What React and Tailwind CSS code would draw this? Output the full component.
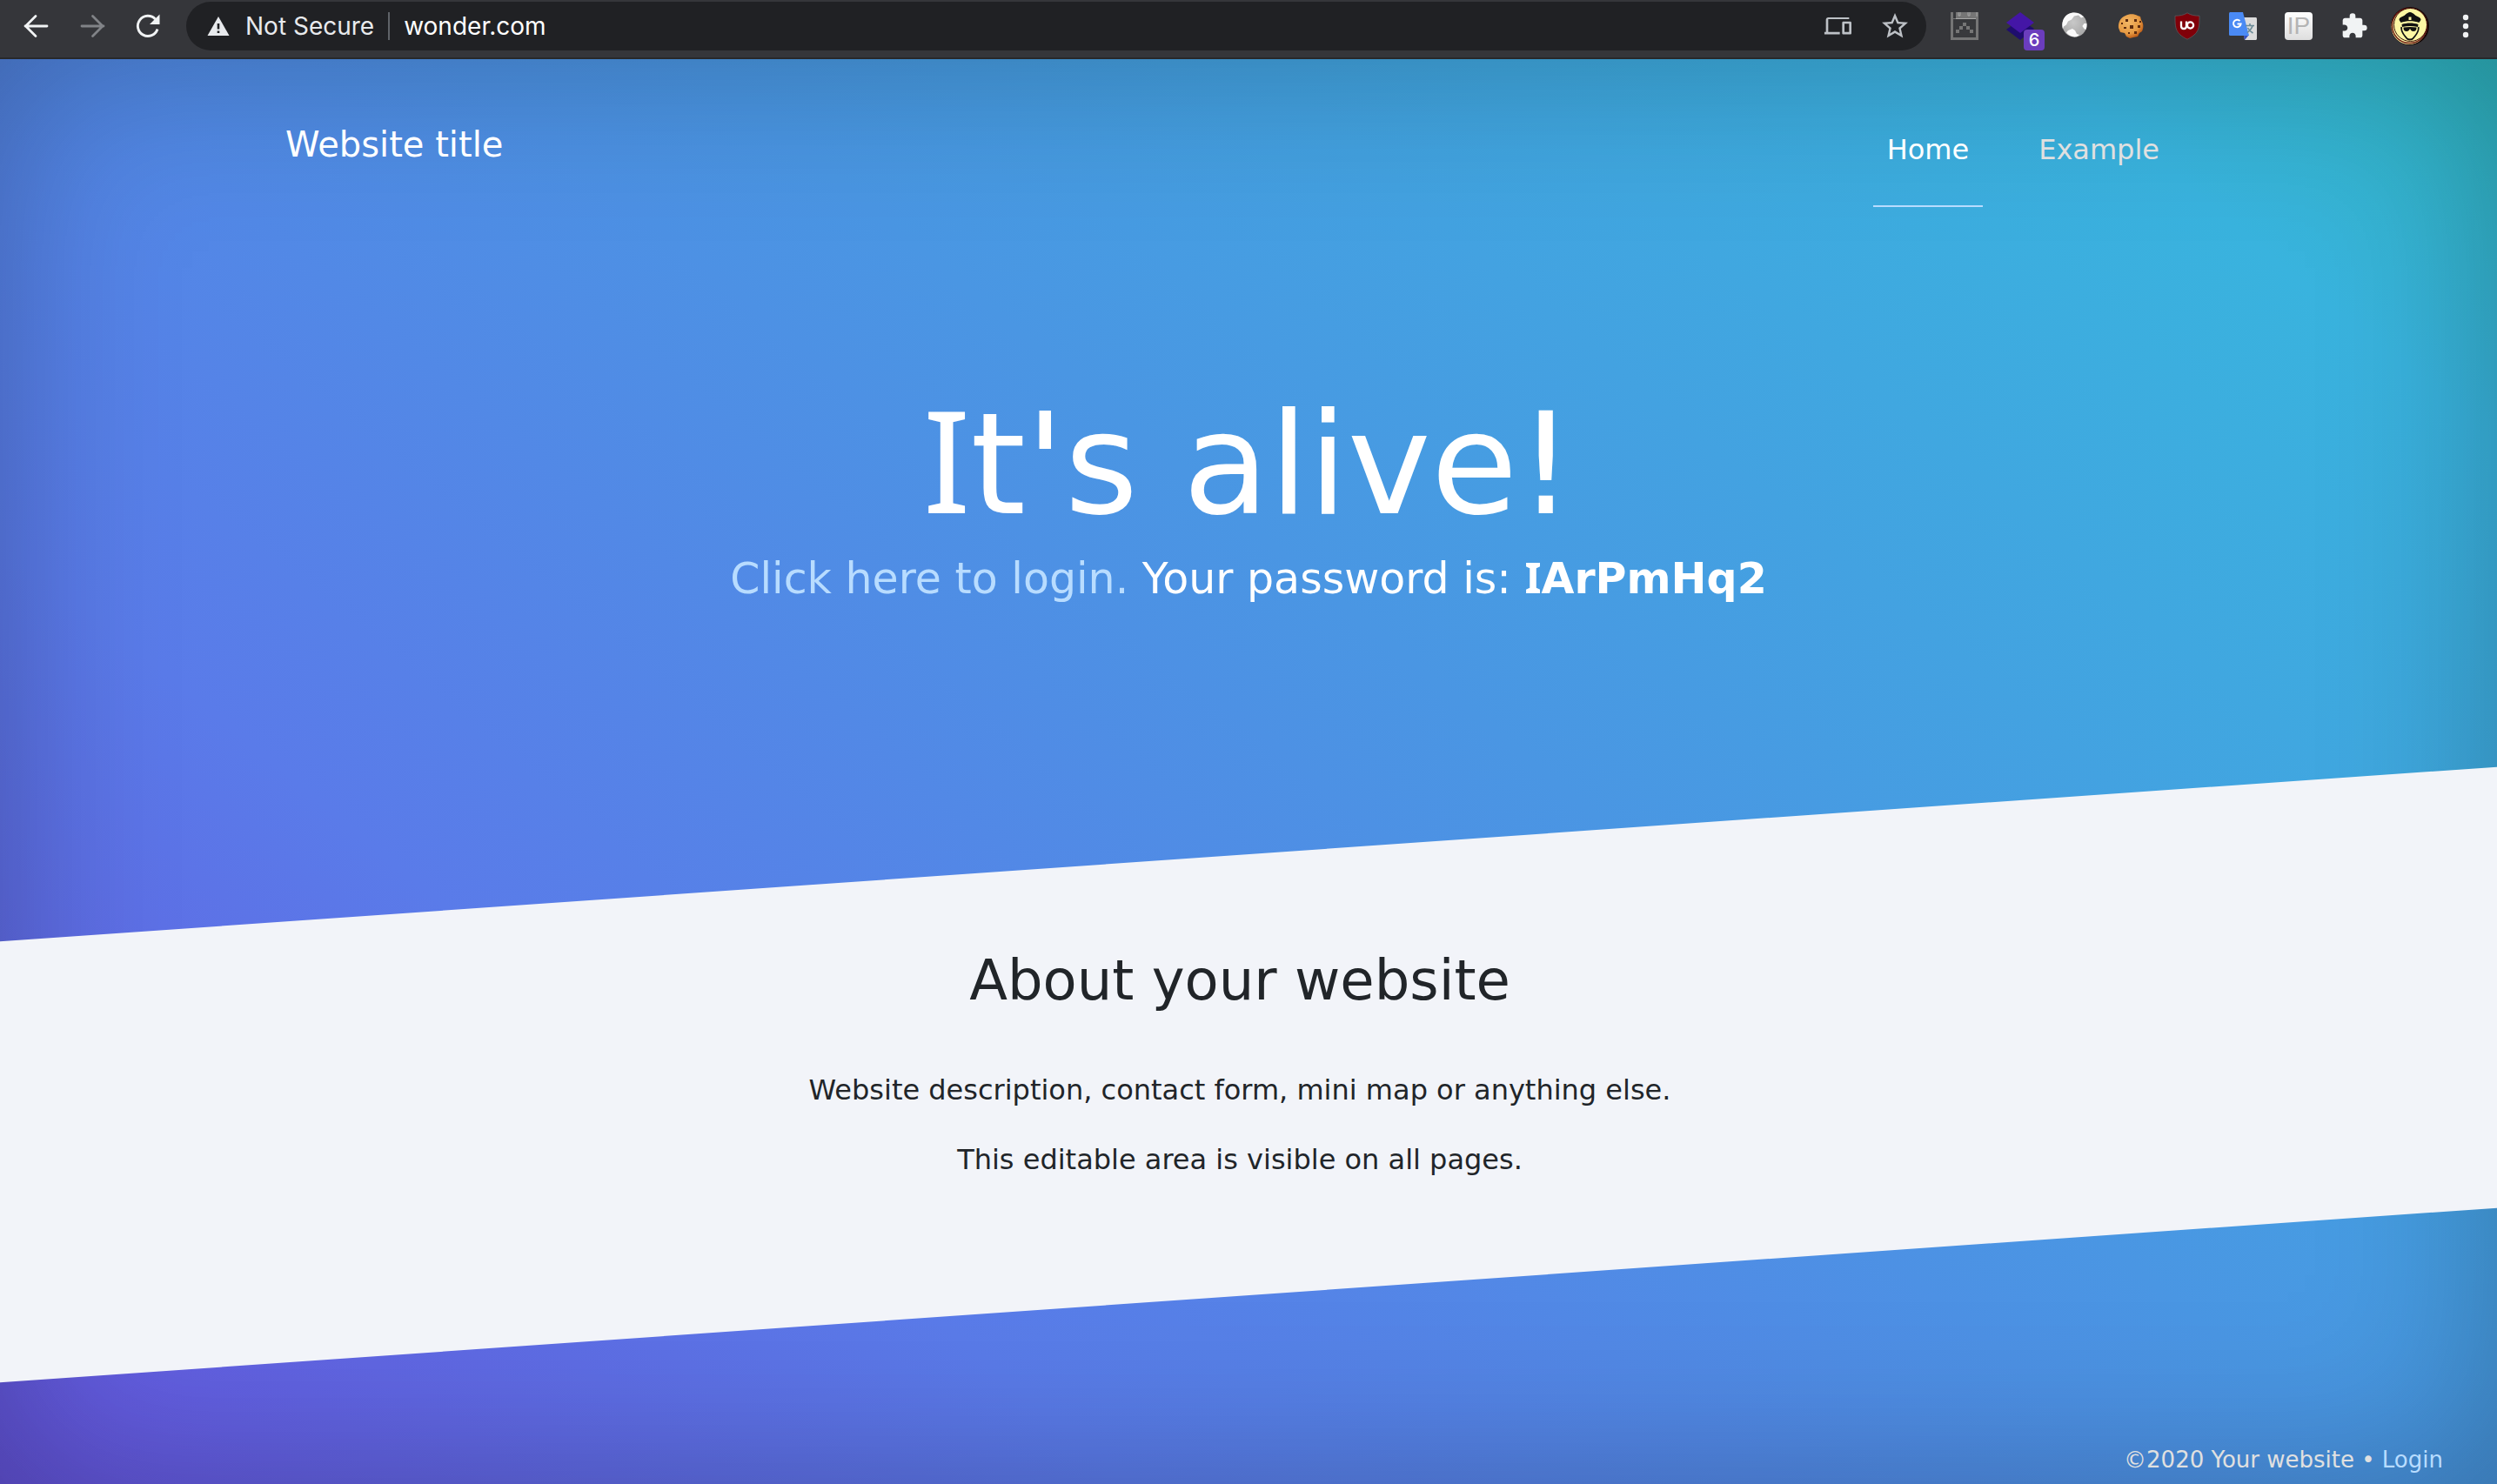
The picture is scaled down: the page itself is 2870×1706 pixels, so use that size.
import React from "react";

const BackIcon = () => (
  <svg viewBox="0 0 32 32" className="size-8" fill="none" stroke="#f1f3f4" strokeWidth="2.8" strokeLinecap="round" strokeLinejoin="round">
    <path d="M28 16H3M15 4.500 3.500 16 15 27.500" />
  </svg>
);

const ForwardIcon = () => (
  <svg viewBox="0 0 32 32" className="size-8" fill="none" stroke="#818387" strokeWidth="2.8" strokeLinecap="round" strokeLinejoin="round">
    <path d="M4 16h25M16.500 4.500 28 16 16.500 27.500" />
  </svg>
);

const ReloadIcon = () => (
  <svg viewBox="0 0 32 32" className="size-8">
    <path d="M27 19.500A11.600 11.600 0 1 1 24.500 8" fill="none" stroke="#f1f3f4" strokeWidth="2.900" />
    <path d="M29.500 2.500V14H18z" fill="#f1f3f4" />
  </svg>
);

const WarningIcon = () => (
  <svg viewBox="0 0 26 24" className="w-[26px] h-6">
    <path d="M13 1 25.500 23H.5z" fill="#e8eaed" />
    <path d="M11.700 9h2.600v6.500h-2.600zM11.700 17.500h2.600V20h-2.600z" fill="#202124" />
  </svg>
);

const DevicesIcon = () => (
  <svg viewBox="0 0 24 24" className="size-8" fill="#bdc1c6">
    <path d="M4 6h18V4.500H4c-1.100 0-2 .9-2 2V17H.7v2.200H14V17H4zm19 2h-6c-.55 0-1 .45-1 1v9.200c0 .55.45 1 1 1h6c.55 0 1-.45 1-1V9c0-.55-.45-1-1-1m-1 9h-4v-7h4z" />
  </svg>
);

const StarIcon = () => (
  <svg viewBox="0 0 24 24" className="size-9" fill="#bdc1c6">
    <path d="m22 9.240-7.190-.62L12 2 9.190 8.630 2 9.240l5.460 4.730L5.820 21 12 17.270 18.180 21l-1.630-7.030zM12 15.400l-3.760 2.270 1-4.280-3.320-2.880 4.380-.38L12 6.100l1.710 4.040 4.380.38-3.320 2.880 1 4.280z" />
  </svg>
);

const CalendarIcon = () => (
  <svg viewBox="0 0 32 32" className="size-8">
    <path d="M0 0h32v32H0z" fill="#757575" />
    <path d="M3 8h26v21H3z" fill="#38393c" />
    <path d="M3 0h3v7H3z" fill="#38393c" />
    <path d="M9 0v4h2V0M20 0v4h2V0M30 0v5" fill="none" stroke="#a8a8a8" strokeWidth="1" />
    <path d="M6 7.500h23" stroke="#a8a8a8" strokeWidth="1" />
    <path d="M14 12h4v4h-4zM10 16h4v4h-4zM18 16h4v4h-4zM6 20h4v4H6zM22 20h4v4h-4z" fill="#757575" />
  </svg>
);

const LayersIcon = () => (
  <svg viewBox="0 0 32 32" className="size-8">
    <path d="M16 8 32 19 16 32 0 20z" fill="#1f0d6e" />
    <path d="m16 0 16 12-16 12L0 12z" fill="#4416a6" />
  </svg>
);

const GlobeIcon = () => (
  <svg viewBox="0 0 32 32" className="size-8">
    <defs>
      <radialGradient id="globe" cx=".45" cy=".4" r=".6">
        <stop offset="0" stopColor="#c8c8c8" />
        <stop offset="1" stopColor="#a8a8a8" />
      </radialGradient>
    </defs>
    <circle cx="14.500" cy="14.500" r="14" fill="url(#globe)" />
    <path d="M1 10C3 4 8 .6 13 .6c6-.2 10 3 12 5l-3 1-3-3-5 1-3 4-4 2-2 4-3 2-1 3c-1-3-1-7 0-9.600M28.400 13c.3 3 0 5-1 7l-2-1-2-3 2-3zM7 21l5-2 3 2 2 4 3 1-3 2.300c-5 .7-9-1-12-5z" fill="#fafafa" />
  </svg>
);

const CookieIcon = () => (
  <svg viewBox="0 0 32 32" className="size-8">
    <defs>
      <radialGradient id="cookie" cx=".4" cy=".35" r=".7">
        <stop offset="0" stopColor="#f3b765" />
        <stop offset=".65" stopColor="#e59a43" />
        <stop offset="1" stopColor="#b9510d" />
      </radialGradient>
    </defs>
    <path d="M9 4c4-2.500 10-2.500 14 0l3 1 1 4c3 4 3 9 1 13l-3 2-2 4-5 1-4 1-4-2-2-4-5-1-2-5C.5 12 3 6 9 4" fill="url(#cookie)" />
    <path d="M9 8h3v3H9zM19 8h3v3h-3zM14 15h4v4h-4zM23 15h3v3h-3zM7 17h3v2H7zM19 22h3v3h-3zM4 12h2v2H4zM25 10h2v2h-2zM12 23h2v2h-2z" fill="#5c2c10" />
  </svg>
);

const ShieldIcon = () => (
  <svg viewBox="0 0 32 32" className="size-8">
    <path d="M16 .8C12 3.500 7 4.200 2 4.200c0 14 0 20 14 27 14-7 14-13 14-27-5 0-10-.7-14-3.400" fill="#800009" stroke="#5b5b5e" strokeWidth=".8" />
    <path d="M9 10.500v5.500c0 4 6 4 6 0v-5.500" fill="none" stroke="#fff" strokeWidth="2.300" />
    <circle cx="19.500" cy="15" r="3.600" fill="none" stroke="#fff" strokeWidth="2.300" />
  </svg>
);

const TranslateIcon = () => (
  <svg viewBox="0 0 32 32" className="size-8">
    <path d="M14 6h16.500c.8 0 1.500.7 1.500 1.500v23c0 .8-.7 1.500-1.500 1.500H18z" fill="#dcdcdc" />
    <path d="m17 27 6-1-5 6z" fill="#3550c0" />
    <path d="M1.500 0H16l7 27H1.500A1.500 1.500 0 0 1 0 25.500v-24C0 .7.7 0 1.500 0" fill="#4a8af4" />
    <path d="M12.500 10A4.300 4.300 0 1 0 13.600 13.600H9.500" fill="none" stroke="#fff" strokeWidth="2" />
    <path d="M19 15.500h10M24 13v2.500M27 15.500c-1 4-3.500 6-6 8M21.500 18c1.500 3 3.500 4.500 6 6" fill="none" stroke="#6a8a96" strokeWidth="1.600" />
  </svg>
);

const PuzzleIcon = () => (
  <svg viewBox="0 0 24 24" className="size-8" fill="#f1f3f4">
    <path d="M20.500 11H19V7c0-1.100-.9-2-2-2h-4V3.500a2.500 2.500 0 0 0-5 0V5H4c-1.100 0-1.990.9-1.990 2v3.800H3.500c1.490 0 2.700 1.210 2.700 2.700s-1.210 2.700-2.700 2.700H2V20c0 1.100.9 2 2 2h3.800v-1.500c0-1.490 1.210-2.700 2.700-2.700s2.700 1.210 2.700 2.700V22H17c1.100 0 2-.9 2-2v-4h1.500a2.500 2.500 0 0 0 0-5" />
  </svg>
);

const AvatarIcon = () => (
  <svg viewBox="0 0 44 44" className="size-11">
    <circle cx="22" cy="22" r="22" fill="#160706" />
    <circle cx="21" cy="22.500" r="20.500" fill="#fdf7a3" />
    <circle cx="21.500" cy="21.500" r="20" fill="#fdf7a3" stroke="#6a1410" strokeWidth="1.400" />
    <circle cx="22.500" cy="20.500" r="19" fill="#fdf7a3" stroke="#3a0b08" strokeWidth="1" />
    <path d="M9.500 14c1.500-3 5-3 7-5 2-1.600 3.500-3 5.500-3s3.500 1.400 5.500 3c2 2 5.500 2 7 5 0 2-1.500 2.500-2 4-6-2.500-15-2.500-21 0-.5-1.500-2-2-2-4" fill="#111" />
    <path d="M20.500 11.500h3v3.500h-3z" fill="#fdf7a3" />
    <path d="M12.500 20c6-2 13-2 19 0l-.5 3c-6-1.500-12-1.500-18 0z" fill="#111" />
    <path d="M12.200 23c-1 6 3 9 6 13 1.500 2 6 2 7.500 0 3-4 7-7 6-13" fill="none" stroke="#111" strokeWidth="1.800" />
    <path d="M14.500 23.500c5-.8 10-.8 15 0 .2 3-1.300 4.500-3.500 4.500-2.500 0-3.200-1.500-4-3-.8 1.500-1.500 3-4 3-2.200 0-3.700-1.500-3.500-4.500" fill="#111" />
  </svg>
);

const DotsIcon = () => (
  <svg viewBox="0 0 32 32" className="size-8" fill="#f1f3f4">
    <circle cx="16" cy="6" r="3.200" />
    <circle cx="16" cy="16" r="3.200" />
    <circle cx="16" cy="26" r="3.200" />
  </svg>
);

const ToolButton = ({ label, children }) => (
  <button type="button" aria-label={label} className="relative flex h-14 w-16 shrink-0 items-center justify-center">
    {children}
  </button>
);

const BrowserBar = () => (
  <div className="flex h-[68px] items-start border-b-2 border-[#28292b] bg-[#35363a] pt-0.5 pr-1 pl-[10px] font-['Inter',sans-serif]">
    <ToolButton label="Back"><BackIcon /></ToolButton>
    <ToolButton label="Forward"><ForwardIcon /></ToolButton>
    <ToolButton label="Reload"><ReloadIcon /></ToolButton>
    <div className="mx-3 flex h-14 min-w-0 flex-1 items-center rounded-full bg-[#202124] pr-5 pl-6 text-[28px]">
      <WarningIcon />
      <span className="ml-[18px] whitespace-nowrap text-[#e8eaed]">Not Secure</span>
      <span className="mx-4 h-8 w-0.5 shrink-0 bg-[#5f6368]" />
      <input aria-label="Address" defaultValue="wonder.com" className="min-w-0 flex-1 bg-transparent text-white outline-none" />
      <button type="button" aria-label="Send to your devices" className="mr-8"><DevicesIcon /></button>
      <button type="button" aria-label="Bookmark this page" className="-mr-0.5"><StarIcon /></button>
    </div>
    <ToolButton label="Calendar"><CalendarIcon /></ToolButton>
    <ToolButton label="Layers">
      <LayersIcon />
      <span className="absolute right-1 bottom-0 flex size-6 items-center justify-center rounded bg-[#6b3dbd] text-[20px] leading-6 font-medium text-white">6</span>
    </ToolButton>
    <ToolButton label="Globe"><GlobeIcon /></ToolButton>
    <ToolButton label="Cookies"><CookieIcon /></ToolButton>
    <ToolButton label="Content blocker"><ShieldIcon /></ToolButton>
    <ToolButton label="Translate"><TranslateIcon /></ToolButton>
    <ToolButton label="IP address">
      <span className="flex size-8 items-center justify-center rounded bg-linear-to-b from-white to-[#dedede] font-['Liberation_Sans',sans-serif] text-[28px] leading-8 text-[#b4b4b4]">IP</span>
    </ToolButton>
    <ToolButton label="Extensions"><PuzzleIcon /></ToolButton>
    <ToolButton label="Profile"><AvatarIcon /></ToolButton>
    <ToolButton label="Menu"><DotsIcon /></ToolButton>
  </div>
);

/* A capital I with serifs, as in Verdana. */
const SerifI = () => <span className="font-['Verdana','Noto_Sans',sans-serif] leading-none">I</span>;

export default function App() {
  return (
    <div className="flex min-h-screen flex-col">
      <BrowserBar />
      <div className="flex flex-1 flex-col overflow-hidden bg-[linear-gradient(40deg,#6555de_0%,#5a7be9_27%,#4a96e3_57%,#39b3de_89%,#2fb8c4_100%)] font-['Verdana','DejaVu_Sans',sans-serif] text-white shadow-[inset_0_0_200px_rgba(0,0,0,0.27)]">
        <header className="mx-auto flex w-full max-w-[2214px] items-start justify-between">
          <a href="#home" className="mt-[70px] text-[40px] leading-[56px]">Website title</a>
          <nav className="mt-20 mr-11 flex gap-12 text-[32px] leading-[48px]">
            <a href="#home" className="border-b-2 border-[#b8dcff] px-4 pb-10">Home</a>
            <a href="#example" className="px-4 text-[#e0e0e0]">Example</a>
          </nav>
        </header>
        <main>
          <section className="pt-[200px] text-center">
            <h1 className="text-[162px] leading-[192px]"><SerifI />t's alive!</h1>
            <p className="text-[49px] leading-[72px]">
              <a href="#login" className="text-[#b8dcff]">Click here to login.</a> Your password is: <b><SerifI />ArPmHq2</b>
            </p>
          </section>
          <section className="relative mt-[280px] pt-[105px] pr-5 pb-[132px] text-center text-[#212529] before:absolute before:inset-0 before:-skew-y-[4deg] before:bg-[#f2f4f9]">
            <div className="relative">
              <h2 className="text-[64px] leading-[80px]">About your website</h2>
              <p className="mt-[62px] text-[32px] leading-[48px]">Website description, contact form, mini map or anything else.</p>
              <p className="mt-8 text-[32px] leading-[48px]">This editable area is visible on all pages.</p>
            </div>
          </section>
        </main>
        <footer className="mt-auto pr-[62px] pb-2 text-right text-[26px] leading-10 text-[#e0e0e0]">
          ©2020 Your website • <a href="#login" className="text-[#b8dcff]">Login</a>
        </footer>
      </div>
    </div>
  );
}
